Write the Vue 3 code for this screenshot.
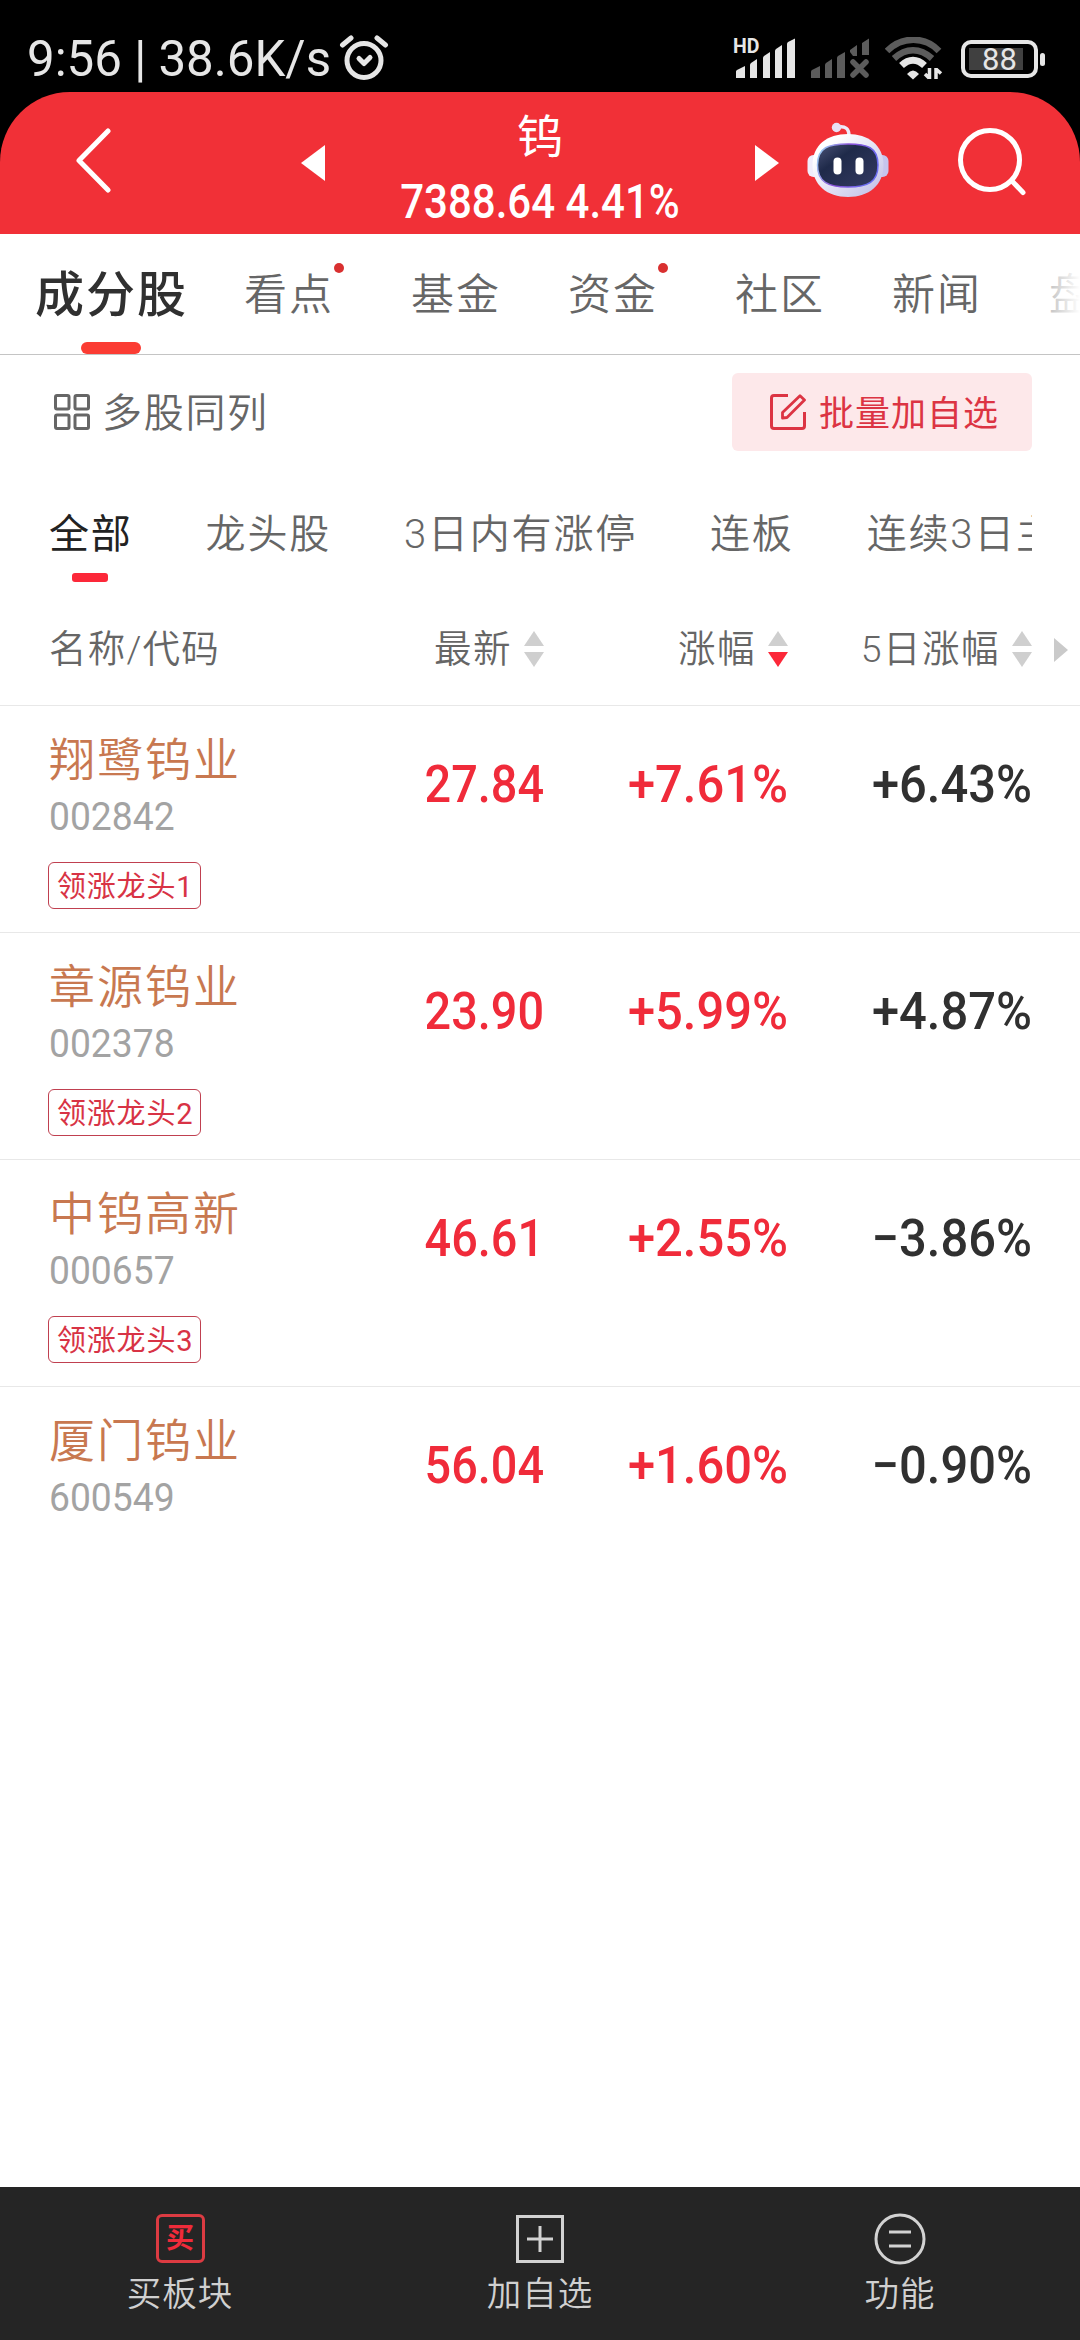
<template>
  <div class="page">
    <div class="status-bar">
      <span class="status-time">9:56 | 38.6K/s</span>
      <svg class="icon-alarm" viewBox="0 0 50 46" fill="none" stroke="#e6e6e6" stroke-linecap="round">
        <circle cx="25" cy="25.5" r="17" stroke-width="5" />
        <path d="M3.5 10L12 3M46.500 10L38 3" stroke-width="5" />
        <path d="M20 23.500L25 28.500L31 22.500" stroke-width="5" stroke-linejoin="round" />
      </svg>
      <div class="status-right">
        <svg class="icon-signal" viewBox="0 0 62 42" fill="#e6e6e6">
          <text x="0" y="15" class="hd-text">HD</text>
          <path d="M3 33.500Q3 32.500 4 32L12 28V40H3ZM17 27Q17 26 18 25L24 21V40H17ZM30 20Q30 19 31 18L37 14V40H30ZM42 13Q42 12 43 11L49 7V40H42ZM54 6Q54 5 55 4L62 0.500V40H54Z" />
        </svg>
        <svg class="icon-signal-off" viewBox="0 0 59 42" fill="#5c5c5c">
          <path d="M0 34Q0 32.500 1 32L9 28V40H0ZM14 27Q14 26 15 25L21 21V40H14ZM26 20Q26 19 27 18L34 14V40H26ZM39 12L46 7V18H42L39 14ZM51 5L58 0.500V17H51Z" />
          <path d="M42 24L55 37M55 24L42 37" stroke="#5c5c5c" stroke-width="5.500" stroke-linecap="round" />
        </svg>
        <svg class="icon-wifi" viewBox="0 0 58 44" fill="none">
          <path d="M2 14C17 -1 40 -1 54 14" stroke="#5c5c5c" stroke-width="6.500" />
          <path d="M9 21.500C21 10.500 35 10.500 47 21.500" stroke="#5c5c5c" stroke-width="6.500" />
          <path d="M16.500 28.500C24 21.500 32 21.500 39.500 28.500" stroke="#e6e6e6" stroke-width="7" />
          <path d="M22 37Q28 30 34 37L28 42.500Z" fill="#e6e6e6" />
          <path d="M44.500 31V42M44 41L40 37M51 42V31M51.500 32.500L56 36.500" stroke="#e6e6e6" stroke-width="3.500" />
        </svg>
        <div class="battery">
          <div class="battery-body">
            <div class="battery-level" :style="{ width: battery + '%' }"></div>
            <span class="battery-text">{{ battery }}</span>
          </div>
          <div class="battery-cap"></div>
        </div>
      </div>
    </div>

    <header class="header">
      <svg class="icon-back" viewBox="0 0 36 66" fill="none">
        <path d="M33 3L4 32.500L33 62" stroke="#fff" stroke-width="5" stroke-linecap="round" stroke-linejoin="round" />
      </svg>
      <svg class="icon-prev" viewBox="0 0 24 36"><path d="M24 0V36L0 18Z" fill="#fff" /></svg>
      <div class="header-title">
        <div class="title-name">钨</div>
        <div class="title-value">7388.64 4.41%</div>
      </div>
      <svg class="icon-next" viewBox="0 0 24 36"><path d="M0 0V36L24 18Z" fill="#fff" /></svg>
      <svg class="icon-robot" viewBox="0 0 82 76">
        <defs>
          <linearGradient id="shell" x1="0" y1="0" x2="1" y2="1">
            <stop offset="0.200" stop-color="#fff" />
            <stop offset="1" stop-color="#bdbbe6" />
          </linearGradient>
          <linearGradient id="rim" x1="0" y1="0" x2="1" y2="0.300">
            <stop offset="0" stop-color="#9fe0f5" />
            <stop offset="0.500" stop-color="#8a4fd8" />
            <stop offset="1" stop-color="#6a6cf0" />
          </linearGradient>
          <linearGradient id="face" x1="0" y1="0" x2="1" y2="1">
            <stop offset="0" stop-color="#4b5377" />
            <stop offset="0.350" stop-color="#1f2a4a" />
            <stop offset="1" stop-color="#343a61" />
          </linearGradient>
        </defs>
        <path d="M31 5Q42 3 42 14" fill="none" stroke="#eeeafa" stroke-width="3.500" />
        <circle cx="29.500" cy="5.500" r="4.700" fill="#e8e0f5" />
        <rect x="0.500" y="33" width="14" height="22" rx="6" fill="#f0edfb" />
        <rect x="67.500" y="33" width="14" height="22" rx="6" fill="#c6c4ee" />
        <path d="M41 12C61 12 76.500 23 76.500 43C76.500 63 62 75 41 75C20 75 5.500 63 5.500 43C5.500 23 20 12 41 12Z" fill="url(#shell)" />
        <path d="M41 22C60 22 71 25 71 43C71 60 61 65 41 65C21 65 10.500 60 10.500 43C10.500 25 22 22 41 22Z" fill="url(#face)" stroke="url(#rim)" stroke-width="1.500" />
        <rect x="26.500" y="35.500" width="8" height="17" rx="4" fill="#fff" />
        <rect x="48.500" y="35.500" width="8" height="17" rx="4" fill="#fff" />
      </svg>
      <svg class="icon-search" viewBox="0 0 68 68" fill="none" stroke="#fff" stroke-width="5">
        <circle cx="32" cy="32" r="29.500" />
        <path d="M54 53L65 64.500" stroke-linecap="round" />
      </svg>
    </header>

    <nav class="tabs">
      <div v-for="(tab, index) in tabs" :key="tab.name" class="tab" :class="{ 'is-active': index === 0 }">
        <span>{{ tab.name }}</span>
        <i v-if="tab.dot" class="tab-dot"></i>
      </div>
      <div class="tabs-fade"></div>
    </nav>

    <div class="toolbar">
      <div class="multi-view">
        <svg class="icon-tool" viewBox="0 0 36 36" fill="none" stroke="#666" stroke-width="3">
          <rect x="1.500" y="1.500" width="13.500" height="13.500" rx="1.500" />
          <rect x="21" y="1.500" width="13.500" height="13.500" rx="1.500" />
          <rect x="1.500" y="21" width="13.500" height="13.500" rx="1.500" />
          <rect x="21" y="21" width="13.500" height="13.500" rx="1.500" />
        </svg>
        <span>多股同列</span>
      </div>
      <div class="batch-btn">
        <svg class="icon-tool" viewBox="0 0 36 36" fill="none" stroke="#dc3443" stroke-width="3">
          <path d="M18 1.500H4Q1.500 1.500 1.500 4V32Q1.500 34.500 4 34.500H32Q34.500 34.500 34.500 32V18" />
          <path d="M12.500 24V18.500L30 1.800L34.500 6L17 23.500Z" stroke-width="2.800" stroke-linejoin="round" />
        </svg>
        <span>批量加自选</span>
      </div>
    </div>

    <div class="filters">
      <div v-for="(name, index) in filters" :key="name" class="filter" :class="{ 'is-active': index === 0 }">
        {{ name }}
      </div>
    </div>

    <div class="table-head">
      <div class="col-name">名称/代码</div>
      <div v-for="col in columns" :key="col.name" class="col-head" :class="col.cls">
        <span>{{ col.name }}</span>
        <svg class="icon-sort" viewBox="0 0 20 36">
          <path d="M10 0L20 15H0Z" fill="#cfcfcf" />
          <path d="M10 36L20 21H0Z" :fill="col.desc ? '#fc2839' : '#cfcfcf'" />
        </svg>
      </div>
      <svg class="icon-more" viewBox="0 0 14 24"><path d="M0 0V24L14 12Z" fill="#cacaca" /></svg>
    </div>

    <div class="stock-list">
      <div v-for="stock in stocks" :key="stock.code" class="stock-row">
        <div class="stock-info">
          <div class="stock-name">{{ stock.name }}</div>
          <div class="stock-code">{{ stock.code }}</div>
          <div v-if="stock.tag" class="stock-tag">{{ stock.tag }}</div>
        </div>
        <div class="num col-price">{{ stock.price }}</div>
        <div class="num col-change">{{ stock.change }}</div>
        <div class="num col-five">{{ stock.five }}</div>
      </div>
    </div>

    <footer class="footer">
      <div class="footer-item">
        <div class="icon-buy">买</div>
        <span>买板块</span>
      </div>
      <div class="footer-item">
        <svg class="icon-footer" viewBox="0 0 52 52" fill="none" stroke="#d2d2d2" stroke-width="3">
          <rect x="3.500" y="3.500" width="45" height="45" />
          <path d="M13 26H39M26 13V39" />
        </svg>
        <span>加自选</span>
      </div>
      <div class="footer-item">
        <svg class="icon-footer" viewBox="0 0 52 52" fill="none" stroke="#d2d2d2" stroke-width="3">
          <circle cx="26" cy="26" r="24" />
          <path d="M15 19H37M15 33H37" />
        </svg>
        <span>功能</span>
      </div>
    </footer>
  </div>
</template>

<script setup>
import { ref } from "vue";

const battery = ref(88);

const tabs = ref([
  { name: "成分股" },
  { name: "看点", dot: true },
  { name: "基金" },
  { name: "资金", dot: true },
  { name: "社区" },
  { name: "新闻" },
  { name: "盘" },
]);

const filters = ref(["全部", "龙头股", "3日内有涨停", "连板", "连续3日主"]);

const columns = [
  { name: "最新", cls: "col-price" },
  { name: "涨幅", cls: "col-change", desc: true },
  { name: "5日涨幅", cls: "col-five" },
];

const stocks = ref([
  { name: "翔鹭钨业", code: "002842", tag: "领涨龙头1", price: "27.84", change: "+7.61%", five: "+6.43%" },
  { name: "章源钨业", code: "002378", tag: "领涨龙头2", price: "23.90", change: "+5.99%", five: "+4.87%" },
  { name: "中钨高新", code: "000657", tag: "领涨龙头3", price: "46.61", change: "+2.55%", five: "−3.86%" },
  { name: "厦门钨业", code: "600549", price: "56.04", change: "+1.60%", five: "−0.90%" },
]);
</script>

<style>
body {
  margin: 0;
  background: #000;
}
</style>

<style scoped>
.page {
  display: flex;
  flex-direction: column;
  width: 1080px;
  height: 2340px;
  overflow: hidden;
  background: #fff;
  color: #666;
  font-family: Roboto, "Noto Sans CJK SC", sans-serif;
  font-weight: 350;
  white-space: nowrap;
}

.page svg {
  display: block;
  flex-shrink: 0;
}

/* 状态栏 */
.status-bar {
  display: flex;
  flex-shrink: 0;
  height: 92px;
  background: #000;
  color: #e6e6e6;
}

.status-time {
  width: 311px;
  margin-left: 27px;
  margin-right: 1px;
  font-size: 50px;
  font-weight: 400;
  line-height: 118px;
  transform: scaleX(0.985);
  transform-origin: left;
}

.icon-alarm {
  width: 50px;
  height: 46px;
  margin-top: 35px;
}

.status-right {
  display: flex;
  margin-left: auto;
  padding-right: 35px;
}

.icon-signal {
  width: 62px;
  height: 42px;
  margin: 38px 16px 0 0;
  overflow: visible;
}

.hd-text {
  font-size: 19.500px;
  font-weight: 700;
}

.icon-signal-off {
  width: 59px;
  height: 42px;
  margin: 38px 15px 0 0;
}

.icon-wifi {
  width: 58px;
  height: 44px;
  margin: 37px 18px 0 0;
}

.battery {
  display: flex;
  align-items: center;
  height: 38px;
  margin-top: 40px;
}

.battery-body {
  position: relative;
  box-sizing: border-box;
  width: 77px;
  height: 38px;
  padding: 4px;
  border: 4px solid #e6e6e6;
  border-radius: 10px;
}

.battery-level {
  height: 22px;
  background: #404040;
}

.battery-text {
  position: absolute;
  inset: 0;
  font-size: 31px;
  font-weight: 400;
  line-height: 31px;
  text-align: center;
}

.battery-cap {
  width: 5px;
  height: 13px;
  margin-left: 2px;
  border-radius: 3px;
  background: #e6e6e6;
}

/* 顶部标题 */
.header {
  display: flex;
  flex-shrink: 0;
  height: 142px;
  background: linear-gradient(#000, #000) top / 100% 71px no-repeat;
  position: relative;
  isolation: isolate;
}

.header::before {
  content: "";
  position: absolute;
  inset: 0;
  z-index: -1;
  border-radius: 70px 70px 0 0;
  background: #f13037;
}

.icon-back {
  width: 36px;
  height: 66px;
  margin: 36px 0 0 75px;
}

.icon-prev {
  width: 24px;
  height: 36px;
  margin: 53px 0 0 190px;
}

.header-title {
  width: 430px;
  color: #fff;
  text-align: center;
}

.title-name {
  height: 88px;
  font-size: 46px;
  font-weight: 400;
  line-height: 91px;
}

.title-value {
  height: 46px;
  font-size: 48px;
  font-weight: 500;
  line-height: 43px;
  transform: scaleX(0.875);
}

.icon-next {
  width: 24px;
  height: 36px;
  margin-top: 53px;
}

.icon-robot {
  width: 82px;
  height: 76px;
  margin: 30px 0 0 28px;
}

.icon-search {
  width: 68px;
  height: 68px;
  margin: 36px 0 0 69px;
}

/* 主标签 */
.tabs {
  position: relative;
  display: flex;
  flex-shrink: 0;
  box-sizing: border-box;
  height: 121px;
  padding-left: 35px;
  overflow: hidden;
  border-bottom: 1px solid #c4c4c4;
}

.tab {
  display: flex;
  flex-shrink: 0;
  margin-right: 67px;
  font-size: 43px;
  letter-spacing: 2px;
  line-height: 123px;
}

.tab.is-active {
  position: relative;
  margin-right: 56px;
  color: #303030;
  font-size: 49px;
  font-weight: 500;
}

.tab.is-active::after {
  content: "";
  position: absolute;
  top: 108px;
  left: 46px;
  width: 60px;
  height: 12px;
  border-radius: 6px;
  background: #fb3c33;
}

.tab-dot {
  width: 10px;
  height: 10px;
  margin-top: 29px;
  border-radius: 50%;
  background: #d93030;
}

.tabs-fade {
  position: absolute;
  top: 0;
  right: 0;
  width: 80px;
  height: 120px;
  background: linear-gradient(to right, rgba(255, 255, 255, 0), #fff);
}

/* 工具条 */
.toolbar {
  display: flex;
  flex-shrink: 0;
  align-items: center;
  justify-content: space-between;
  height: 114px;
  padding: 0 48px 0 54px;
}

.icon-tool {
  width: 36px;
  height: 36px;
}

.multi-view {
  display: flex;
  align-items: center;
  gap: 12px;
  font-size: 40px;
  letter-spacing: 1.7px;
  line-height: 56px;
}

.multi-view span {
  padding-top: 3px;
}

.batch-btn span {
  padding-bottom: 3px;
}

.batch-btn {
  display: flex;
  align-items: center;
  box-sizing: border-box;
  gap: 13px;
  width: 300px;
  height: 78px;
  padding-left: 38px;
  border-radius: 6px;
  background: #fde8ea;
  color: #dc3443;
  font-size: 35px;
  font-weight: 400;
  letter-spacing: 1px;
}

/* 筛选标签 */
.filters {
  display: flex;
  flex-shrink: 0;
  gap: 73px;
  height: 114px;
  margin: 0 48px 0 49px;
  overflow: hidden;
  font-size: 40px;
  letter-spacing: 1.8px;
  line-height: 131px;
}

.filter {
  height: 114px;
}

.filter.is-active {
  position: relative;
  color: #222;
  font-weight: 400;
}

.filter.is-active::after {
  content: "";
  position: absolute;
  top: 104px;
  left: 23px;
  width: 36px;
  height: 9px;
  border-radius: 3px;
  background: #fc2839;
}

/* 表头 */
.table-head {
  display: flex;
  flex-shrink: 0;
  align-items: center;
  box-sizing: border-box;
  height: 123px;
  padding: 10px 0 0 49px;
  border-bottom: 1px solid #e8e8e8;
  font-size: 37.500px;
  letter-spacing: 1.500px;
}

.col-name,
.col-head span {
  padding-bottom: 8px;
}

.col-name {
  width: 195px;
  letter-spacing: 1.200px;
}

.col-head {
  display: flex;
  align-items: center;
  justify-content: flex-end;
  gap: 12px;
}

.col-price {
  width: 300px;
}

.col-change {
  width: 244px;
}

.col-five {
  width: 244px;
}

.icon-sort {
  width: 20px;
  height: 36px;
}

.icon-more {
  width: 14px;
  height: 24px;
  margin: 1px 0 0 22px;
}

/* 个股列表 */
.stock-list {
  flex: 1;
}

.stock-row {
  display: flex;
  box-sizing: border-box;
  height: 227px;
  padding-left: 49px;
  border-bottom: 1px solid #e8e8e8;
}

.stock-row:last-child {
  border-bottom: none;
}

.stock-info {
  width: 195px;
}

.stock-name {
  height: 80px;
  padding-top: 14px;
  box-sizing: border-box;
  color: #c87850;
  font-size: 46px;
  letter-spacing: 2px;
  line-height: 80px;
}

.stock-code {
  height: 60px;
  color: #a3a3a3;
  font-size: 39px;
  font-weight: 400;
  line-height: 62px;
  transform: scaleX(0.955);
  transform-origin: left;
}

.stock-tag {
  display: inline-block;
  box-sizing: border-box;
  height: 47px;
  margin: 16px 0 0 -1px;
  padding: 0 7px 0 8px;
  border: 1.500px solid #c04050;
  border-radius: 6px;
  color: #d83345;
  font-size: 29px;
  font-weight: 400;
  letter-spacing: 0.800px;
  line-height: 48px;
}

.num {
  color: #f02b3a;
  font-size: 52px;
  font-weight: 500;
  line-height: 158px;
  text-align: right;
  transform: scaleX(0.94);
  transform-origin: right;
}

.num.col-price {
  transform: scaleX(0.9);
}

.num.col-five {
  color: #303030;
}

/* 底部操作栏 */
.footer {
  display: flex;
  flex-shrink: 0;
  height: 153px;
  background: #252525;
  color: #d0d0d0;
}

.footer-item {
  display: flex;
  flex: 1;
  flex-direction: column;
  align-items: center;
  padding-top: 26px;
  font-size: 34.500px;
  letter-spacing: 1px;
  line-height: 59px;
}

.icon-footer {
  width: 52px;
  height: 52px;
}

.icon-buy {
  box-sizing: border-box;
  width: 49px;
  height: 49px;
  margin: 1px 0 2px;
  border: 3px solid #dc3b42;
  border-radius: 6px;
  color: #f02b3a;
  font-size: 28px;
  font-weight: 700;
  letter-spacing: 0;
  line-height: 43px;
  text-align: center;
}
</style>
